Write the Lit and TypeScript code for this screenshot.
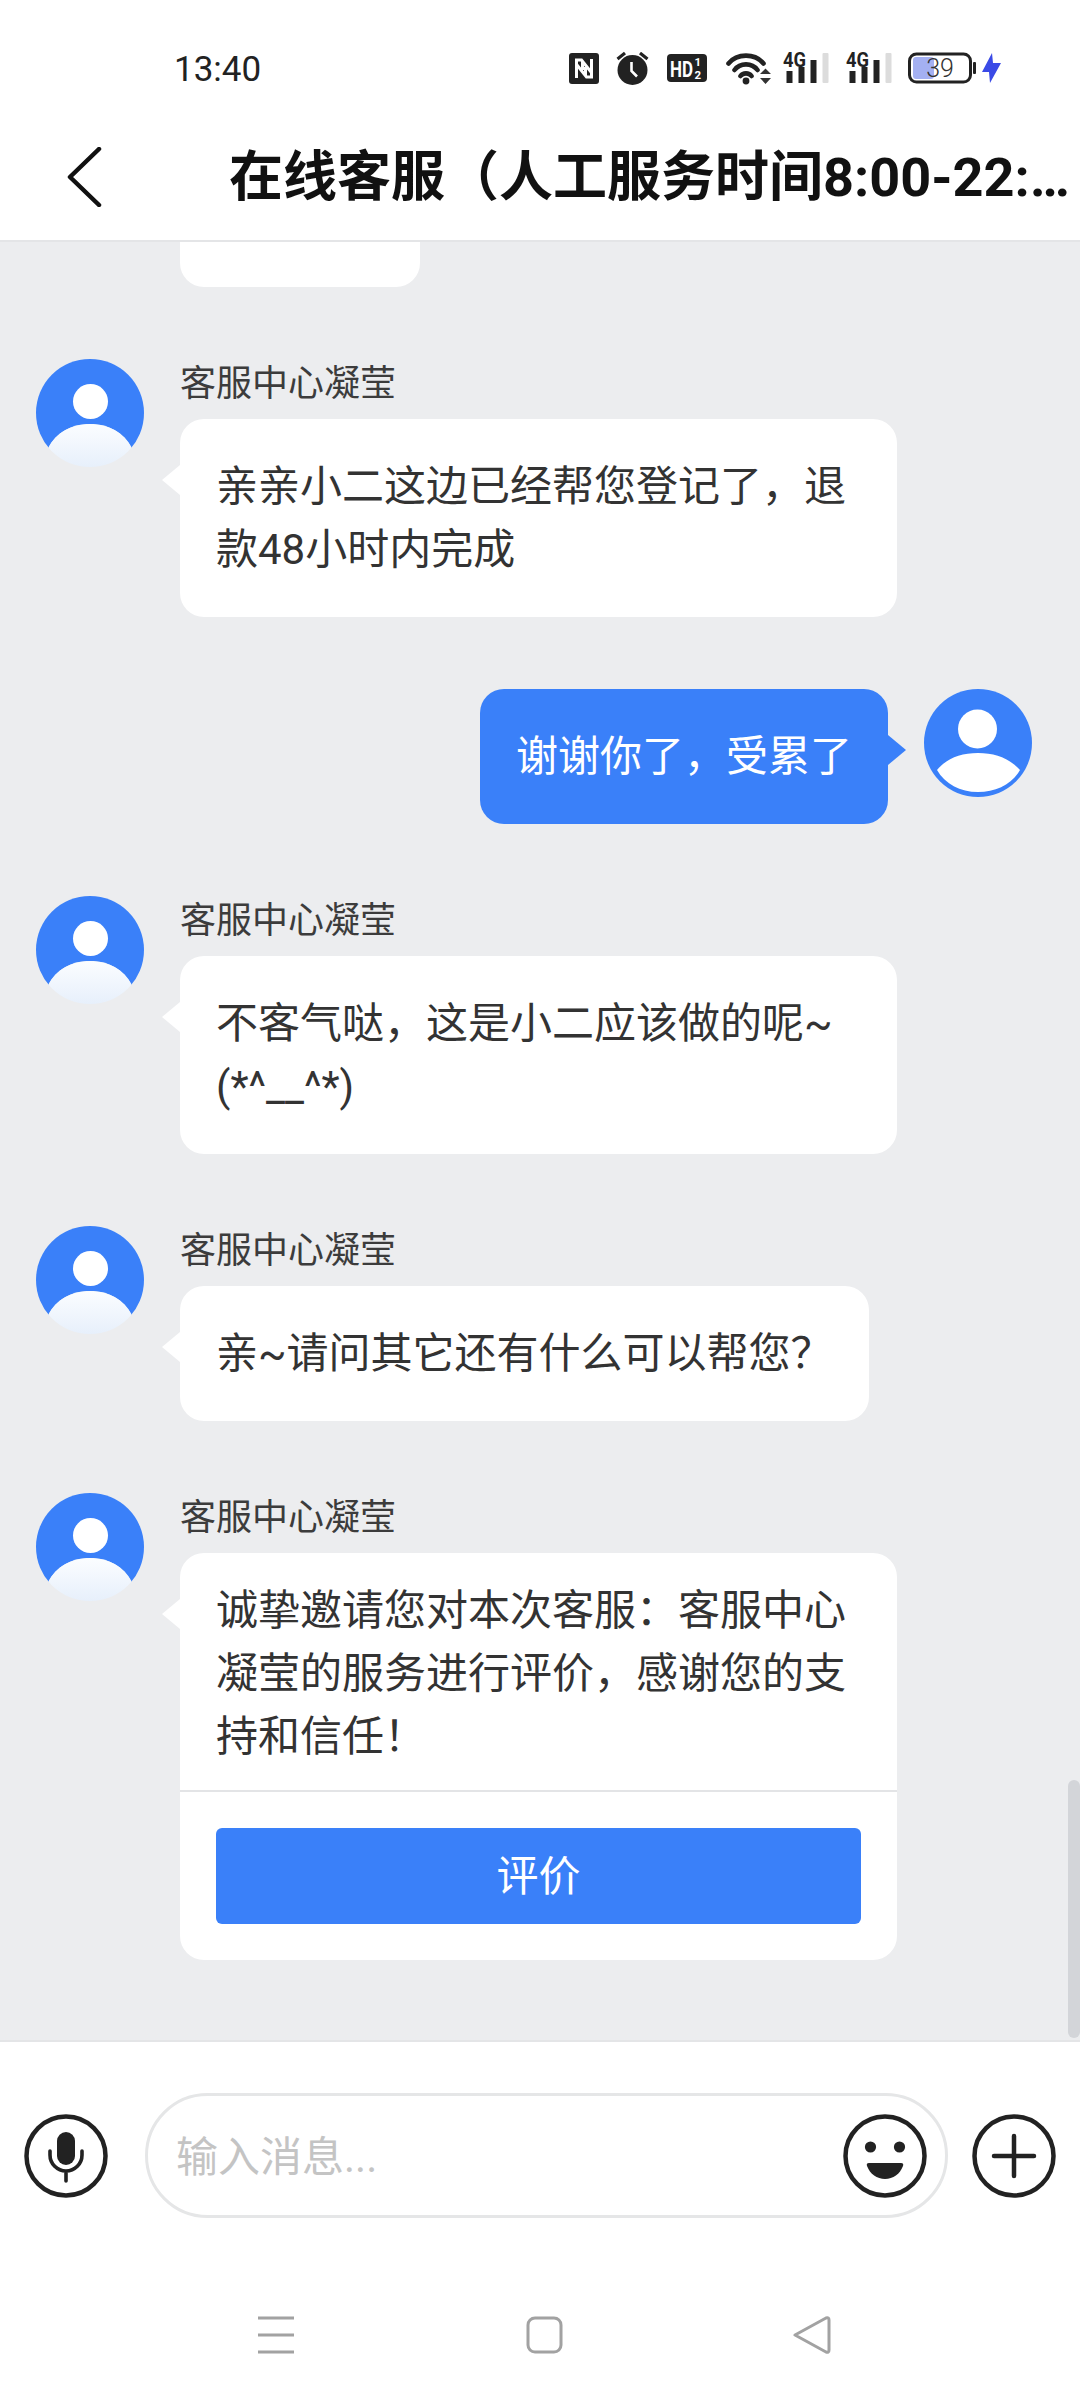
import { LitElement, html, css, svg } from 'lit';
import { customElement } from 'lit/decorators.js';

interface Message {
  text: string;
  name?: string;
  mine?: boolean;
  rate?: boolean;
}

const messages: Message[] = [
  { name: '客服中心凝莹', text: '亲亲小二这边已经帮您登记了，退款48小时内完成' },
  { mine: true, text: '谢谢你了，受累了' },
  { name: '客服中心凝莹', text: '不客气哒，这是小二应该做的呢~(*^__^*)' },
  { name: '客服中心凝莹', text: '亲~请问其它还有什么可以帮您？' },
  { name: '客服中心凝莹', text: '诚挚邀请您对本次客服：客服中心凝莹的服务进行评价，感谢您的支持和信任！', rate: true },
];

const signal = () => html`
  <svg class="open" width="46" height="32" viewBox="0 0 46 32">
    <text x="0" y="14.5" font-family="Roboto" font-weight="700" font-size="20.5" textLength="23" lengthAdjust="spacingAndGlyphs" fill="#222">4G</text>
    <rect x="3.5" y="19" width="6" height="12" fill="#222" />
    <rect x="15.5" y="15" width="6" height="16" fill="#222" />
    <rect x="27.5" y="8" width="6" height="23" fill="#222" />
    <rect x="39.5" y="1" width="6" height="30" rx="1" fill="#dcdcdc" />
  </svg>
`;

const agentAvatar = svg`
  <defs>
    <linearGradient id="fade" x1="0" y1="0" x2="0" y2="1">
      <stop offset="0" stop-color="#fbfdff" />
      <stop offset="1" stop-color="#e6effb" />
    </linearGradient>
    <clipPath id="disc"><circle cx="54" cy="54" r="54" /></clipPath>
    <clipPath id="upper"><path d="M0 0 H108 V90 H96 C88 73 72 65 54 65 C36 65 20 73 12 90 H0 Z" /></clipPath>
  </defs>
  <circle cx="54" cy="54" r="54" fill="#3a80f9" clip-path="url(#upper)" />
  <circle cx="54.5" cy="42.5" r="17.5" fill="#fff" />
  <path clip-path="url(#disc)" d="M12 89 C20 73 36 65 54 65 C72 65 88 73 96 89 L96 110 L12 110 Z" fill="url(#fade)" />
`;

const userAvatar = svg`
  <circle cx="54" cy="54" r="54" fill="#3a80f9" />
  <circle cx="53.5" cy="40" r="19.5" fill="#fff" />
  <path d="M13 81 C22 70 36 64 54 64 C72 64 86 70 96 81 C88 95 72 103 54 103 C36 103 21 95 13 81 Z" fill="#fff" />
`;

@customElement('app-root')
export class AppRoot extends LitElement {
  static styles = css`
    :host {
      display: flex;
      flex-direction: column;
      width: 1080px;
      height: 2400px;
      background: #fff;
      font-family: Roboto, "Noto Sans CJK SC", sans-serif;
      color: #2e2e2e;
      overflow: hidden;
    }
    svg {
      display: block;
      flex: none;
    }
    svg.open {
      overflow: visible;
    }
    .status {
      height: 120px;
      flex: none;
      box-sizing: border-box;
      padding: 50px 78px 0 174px;
      display: flex;
      align-items: flex-start;
      justify-content: space-between;
    }
    .time {
      font-size: 35px;
      line-height: 36px;
      padding-top: 2px;
      color: #222;
    }
    .status-icons {
      display: flex;
      align-items: center;
      height: 36px;
    }
    .header {
      flex: none;
      box-sizing: border-box;
      border-bottom: 2px solid #e4e5e7;
      display: flex;
      align-items: center;
      padding: 0 0 16px 66px;
      height: 122px;
    }
    .back {
      margin-top: 10px;
    }
    .title {
      margin-left: 127px;
      font-size: 54px;
      font-weight: 700;
      color: #111;
      white-space: nowrap;
      overflow: hidden;
      text-overflow: ellipsis;
      width: 842px;
    }
    .chat {
      flex: 1;
      position: relative;
      background: #ecedef;
      overflow: hidden;
      display: flex;
      flex-direction: column;
      gap: 72px;
    }
    .stub {
      margin-left: 180px;
      width: 240px;
      height: 45px;
      background: #fff;
      border-radius: 0 0 24px 24px;
    }
    .row {
      display: flex;
      align-items: flex-start;
      gap: 36px;
      padding-left: 36px;
      width: 897px;
      box-sizing: border-box;
    }
    .row.mine {
      width: auto;
      justify-content: flex-end;
      padding: 0 48px 0 0;
    }
    .body {
      flex: 1;
      min-width: 0;
      display: flex;
      flex-direction: column;
      align-items: flex-start;
    }
    .mine .body {
      flex: none;
    }
    .name {
      height: 60px;
      box-sizing: border-box;
      padding-top: 2px;
      font-size: 36px;
      line-height: 46px;
      color: #3c3c3c;
    }
    .bubble {
      position: relative;
      background: #fff;
      border-radius: 24px;
      padding: 36px;
      font-size: 42px;
      line-height: 63px;
      max-width: 717px;
      box-sizing: border-box;
      color: #333;
    }
    .bubble::before {
      content: '';
      position: absolute;
      top: 46px;
      left: -18px;
      width: 18px;
      height: 30px;
      background: #fff;
      clip-path: polygon(0 50%, 100% 0, 100% 100%);
    }
    .mine .bubble {
      background: #3a80f9;
      color: #fff;
    }
    .mine .bubble::before {
      left: auto;
      right: -18px;
      background: #3a80f9;
      clip-path: polygon(100% 50%, 0 0, 0 100%);
    }
    .bubble.rate {
      width: 717px;
      padding-top: 26px;
    }
    .rate-line {
      margin: 22px -36px 36px;
      border-top: 2px solid #e3e4e6;
    }
    .rate-btn {
      height: 96px;
      background: #3a80f9;
      border-radius: 6px;
      color: #fff;
      font-size: 42px;
      display: flex;
      align-items: center;
      justify-content: center;
    }
    .scrollbar {
      position: absolute;
      right: 0;
      bottom: 2px;
      width: 12px;
      height: 258px;
      border-radius: 6px;
      background: #d3d5d9;
    }
    .footer {
      flex: none;
      height: 360px;
      box-sizing: border-box;
      border-top: 2px solid #e4e5e7;
      padding-top: 51px;
    }
    .input-row {
      display: flex;
      align-items: center;
      padding-left: 24px;
    }
    .input {
      margin: 0 24px 0 37px;
      width: 803px;
      height: 125px;
      box-sizing: border-box;
      border: 3px solid #e5e6e7;
      border-radius: 63px;
      display: flex;
      align-items: center;
      justify-content: space-between;
      padding: 0 18px 0 28px;
    }
    .placeholder {
      font-size: 42px;
      color: #c4c4c4;
      margin-bottom: 4px;
    }
    .nav {
      display: flex;
      gap: 230px;
      padding: 98px 0 0 257px;
    }
  `;

  private renderMessage(m: Message) {
    return html`
      <div class="row ${m.mine ? 'mine' : ''}">
        ${m.mine ? '' : html`<svg width="108" height="108" viewBox="0 0 108 108">${agentAvatar}</svg>`}
        <div class="body">
          ${m.name ? html`<div class="name">${m.name}</div>` : ''}
          <div class="bubble ${m.rate ? 'rate' : ''}">
            ${m.text}
            ${m.rate
              ? html`<div class="rate-line"></div><div class="rate-btn">评价</div>`
              : ''}
          </div>
        </div>
        ${m.mine ? html`<svg width="108" height="108" viewBox="0 0 108 108">${userAvatar}</svg>` : ''}
      </div>
    `;
  }

  render() {
    return html`
      <div class="status">
        <div class="time">13:40</div>
        <div class="status-icons">
          <svg width="30" height="31" viewBox="0 0 30 31">
            <rect width="30" height="31" rx="3" fill="#222" />
            <path d="M7.5 25 V7 H12.5 L22 19 M13.5 8 V17 M16.5 23 V14 M22.5 6 V24 H17.5 L8 12" fill="none" stroke="#fff" stroke-width="3" />
          </svg>
          <svg class="open" style="margin-left:17px" width="33" height="33" viewBox="0 0 33 33">
            <circle cx="16.5" cy="18" r="15" fill="#222" />
            <path d="M15.5 10 V19 L21 24.5" fill="none" stroke="#fff" stroke-width="2.6" />
            <path d="M1.5 7 L9 1 M31.5 7 L24 1" stroke="#222" stroke-width="3.2" />
          </svg>
          <svg class="open" style="margin-left:18px" width="40" height="28" viewBox="0 0 40 28">
            <rect width="40" height="28" rx="4" fill="#222" />
            <text x="3" y="23" font-family="Roboto" font-weight="700" font-size="22" textLength="23" lengthAdjust="spacingAndGlyphs" fill="#fff">HD</text>
            <text x="27.5" y="11.5" font-family="Roboto" font-weight="700" font-size="11.5" fill="#fff">1</text>
            <text x="27.5" y="25" font-family="Roboto" font-weight="700" font-size="11.5" fill="#fff">2</text>
          </svg>
          <svg style="margin-left:19px" width="45" height="33" viewBox="0 0 45 33">
            <path d="M2.5 11.5 C11 1 29 1 37.5 11.5 M8.5 18 C14 10.5 26 10.5 31.5 18 M14.5 24 C17 20.5 23 20.5 25.5 24" fill="none" stroke="#222" stroke-width="4.6" stroke-linecap="round" />
            <circle cx="20" cy="29" r="3.4" fill="#222" />
            <path d="M34 22 L39.5 16.5 L45 22 Z M34 26 L45 26 L39.5 32 Z" fill="#333" />
          </svg>
          <div style="margin-left:12px">${signal()}</div>
          <div style="margin-left:17px">${signal()}</div>
          <svg style="margin-left:16px" width="68" height="32" viewBox="0 0 68 32">
            <rect x="5" y="5" width="21" height="22" rx="3" fill="#a4b0f2" />
            <rect x="1.5" y="2" width="61" height="28" rx="7" fill="none" stroke="#222" stroke-width="3" />
            <rect x="65" y="10" width="3" height="12" rx="1" fill="#222" />
            <text x="32" y="25" text-anchor="middle" font-family="Roboto" font-weight="300" font-size="25" fill="#333">39</text>
          </svg>
          <svg style="margin-left:6px" width="20" height="32" viewBox="0 0 20 32">
            <path d="M10 1 L0 20 H7 L8 31 L19 11 H11 Z" fill="#3a4ae6" />
          </svg>
        </div>
      </div>

      <div class="header">
        <svg class="back" width="36" height="60" viewBox="0 0 36 60">
          <path d="M33 2 L4 30 L33 58" fill="none" stroke="#111" stroke-width="4.5" stroke-linecap="round" stroke-linejoin="round" />
        </svg>
        <div class="title">在线客服（人工服务时间8:00-22:00）</div>
      </div>

      <div class="chat">
        <div class="stub"></div>
        ${messages.map((m) => this.renderMessage(m))}
        <div class="scrollbar"></div>
      </div>

      <div class="footer">
        <div class="input-row">
          <svg width="84" height="84" viewBox="0 0 84 84">
            <circle cx="42" cy="42" r="39.5" fill="none" stroke="#222" stroke-width="4.5" />
            <rect x="33" y="18" width="18" height="33" rx="9" fill="#222" />
            <path d="M26 37 V41 A16 16 0 0 0 58 41 V37 M42 57 V67" fill="none" stroke="#222" stroke-width="3.6" stroke-linecap="round" />
          </svg>
          <div class="input">
            <span class="placeholder">输入消息...</span>
            <svg width="84" height="84" viewBox="0 0 84 84">
              <circle cx="42" cy="42" r="39.5" fill="none" stroke="#222" stroke-width="4.5" />
              <circle cx="27.5" cy="33" r="5.6" fill="#222" />
              <circle cx="56.5" cy="33" r="5.6" fill="#222" />
              <path d="M26 49 H58 Q61 49 60 52 C57 60 50 65 42 65 C34 65 27 60 24 52 Q23 49 26 49 Z" fill="#222" />
            </svg>
          </div>
          <svg width="84" height="84" viewBox="0 0 84 84">
            <circle cx="42" cy="42" r="39.5" fill="none" stroke="#222" stroke-width="4.5" />
            <path d="M22 42 H62 M42 22 V62" stroke="#222" stroke-width="4.5" stroke-linecap="round" />
          </svg>
        </div>
        <div class="nav">
          <svg width="38" height="38" viewBox="0 0 38 38">
            <path d="M1 2 H37 M1 19 H37 M1 36 H37" stroke="#a2a2a2" stroke-width="3" />
          </svg>
          <svg width="38" height="38" viewBox="0 0 38 38">
            <rect x="3" y="2" width="33" height="34" rx="7" fill="none" stroke="#a2a2a2" stroke-width="3" />
          </svg>
          <svg width="38" height="38" viewBox="0 0 38 38">
            <path d="M2 19 L33 2 Q36 1 36 4 V34 Q36 37 33 36 Z" fill="none" stroke="#a2a2a2" stroke-width="3" stroke-linejoin="round" />
          </svg>
        </div>
      </div>
    `;
  }
}
